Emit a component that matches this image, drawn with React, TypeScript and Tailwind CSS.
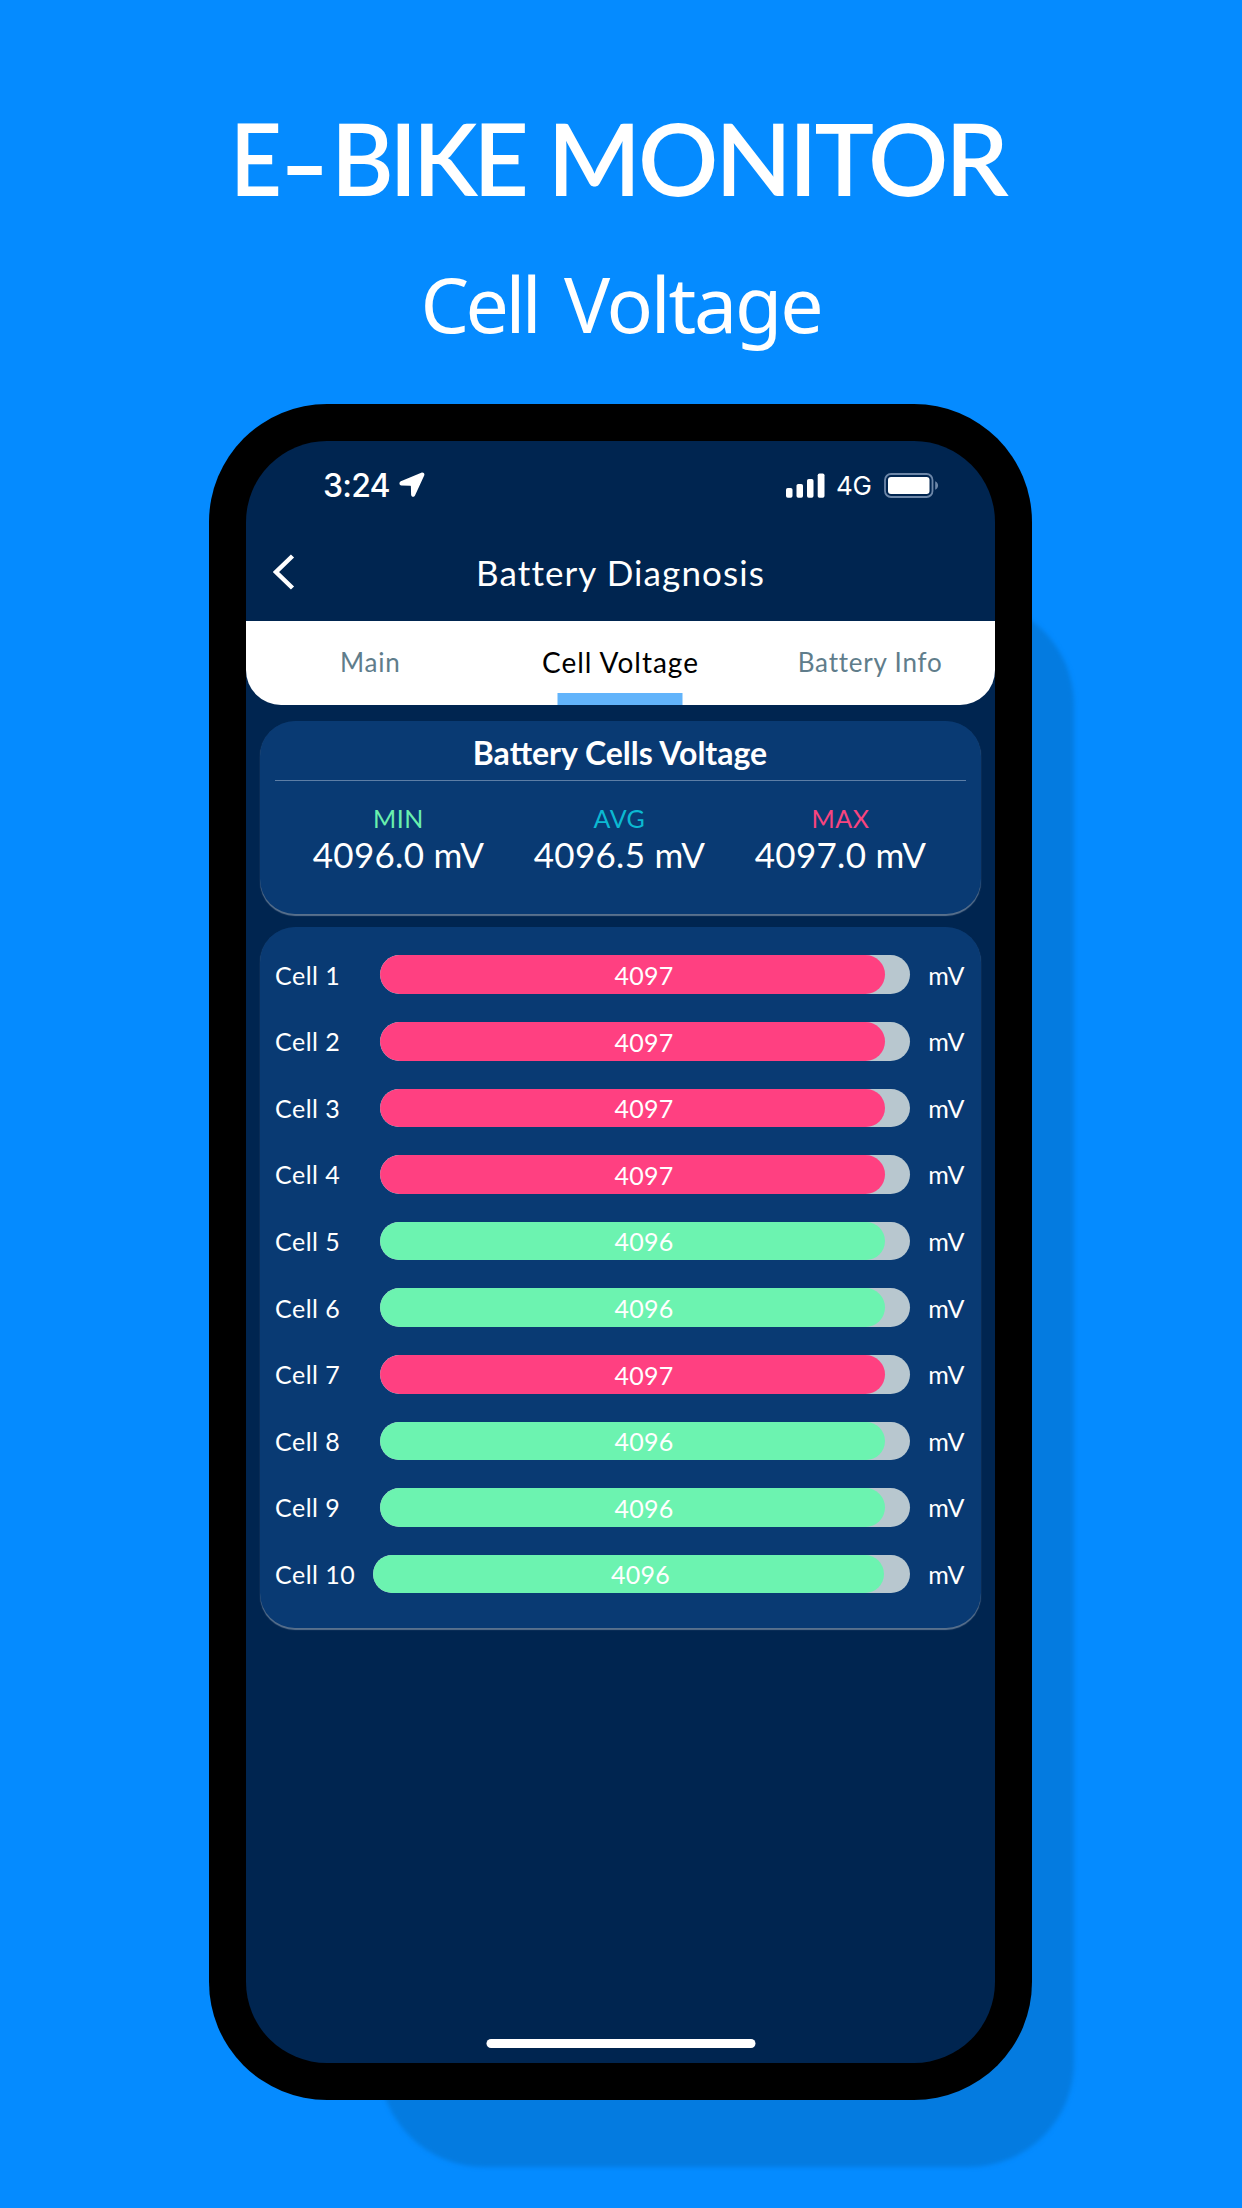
type Cell = { name: string; value: number };

const cells: Cell[] = [
  { name: 'Cell 1', value: 4097 },
  { name: 'Cell 2', value: 4097 },
  { name: 'Cell 3', value: 4097 },
  { name: 'Cell 4', value: 4097 },
  { name: 'Cell 5', value: 4096 },
  { name: 'Cell 6', value: 4096 },
  { name: 'Cell 7', value: 4097 },
  { name: 'Cell 8', value: 4096 },
  { name: 'Cell 9', value: 4096 },
  { name: 'Cell 10', value: 4096 },
];

const stats = [
  { label: 'MIN', value: '4096.0 mV', color: 'text-[#69f0ae]' },
  { label: 'AVG', value: '4096.5 mV', color: 'text-[#0cb9d2]' },
  { label: 'MAX', value: '4097.0 mV', color: 'text-[#f8447f]' },
];

function StatusBar() {
  return (
    <div className="flex h-[88px] items-center justify-between pl-[77px] pr-[56px] font-[Inter,sans-serif]">
      <div className="flex items-center">
        <span className="w-[76px] pt-px text-[32px] font-medium leading-none tracking-[-0.8px]">3:24</span>
        <svg width="26" height="26" viewBox="0 0 26 26" className="fill-white">
          <path d="M22.300 .7 1.800 9.300C-.2 10.200 .1 13.300 2.300 13.400l8.700 .4c.7 0 .9 .3 .9 .9l.2 8c.1 2.300 3 2.800 3.900 .7L25.200 3.600C26 1.600 24.400 0 22.300 .7Z" />
        </svg>
      </div>
      <div className="flex items-center">
        <svg width="39" height="25" viewBox="0 0 39 25" className="fill-white">
          <rect x="0" y="15" width="6.500" height="9.700" rx="1.800" />
          <rect x="10.500" y="11" width="6.500" height="13.700" rx="1.800" />
          <rect x="21" y="6" width="6.500" height="18.700" rx="1.800" />
          <rect x="31.700" y=".5" width="6.800" height="24.200" rx="1.800" />
        </svg>
        <span className="ml-[11px] w-[48px] pt-[2px] text-[26px] leading-none tracking-[-0.3px]">4G</span>
        <svg width="55" height="25" viewBox="0 0 55 25">
          <rect x="1" y="1" width="47.500" height="23" rx="6" fill="none" stroke="#6d87a8" strokeWidth="1.800" />
          <rect x="4" y="4" width="41.500" height="17" rx="3" fill="#fff" />
          <path d="M51.200 8.300c3.800 1.600 3.800 6.800 0 8.400Z" fill="#6d87a8" />
        </svg>
      </div>
    </div>
  );
}

function Header() {
  return (
    <header className="relative flex h-[92px] items-center justify-center pb-[6px]">
      <svg width="22" height="36" viewBox="0 0 22 36" className="absolute left-[27px] top-[25px]">
        <path d="M19.500 2 3 18l16.500 16" fill="none" stroke="#fff" strokeWidth="4.500" />
      </svg>
      <h2 className="text-[35px] leading-[42px] tracking-[1.100px]">Battery Diagnosis</h2>
    </header>
  );
}

function Tabs() {
  return (
    <nav className="grid h-[84px] grid-cols-3 rounded-b-[35px] bg-white text-center text-[26px] leading-[83px] tracking-[0.8px] text-[#607d8b]">
      <span className="-ml-[1px]">Main</span>
      <span className="relative text-[28px] leading-[82px] tracking-[1px] text-black">
        Cell Voltage
        <i className="absolute bottom-0 left-1/2 h-[12px] w-[125px] -translate-x-1/2 bg-[#62b4fb]" />
      </span>
      <span>Battery Info</span>
    </nav>
  );
}

function Summary() {
  return (
    <section className="mx-[14px] mt-[16px] h-[193px] rounded-[35px] bg-[#093a73] px-[15px] pt-[12px] shadow-[0_1.5px_1px_rgba(255,255,255,0.35)]">
      <h3 className="pr-px text-center text-[32px] font-bold leading-[40px]">Battery Cells Voltage</h3>
      <div className="mt-[7px] h-px bg-[#5d7ea6]" />
      <div className="ml-[13px] mr-[15px] mt-[22px] grid grid-cols-3 text-center">
        {stats.map((s) => (
          <div key={s.label}>
            <div className={`text-[25px] leading-[31px] tracking-[0.5px] ${s.color}`}>{s.label}</div>
            <div className="text-[35px] leading-[40px] tracking-[0.300px]">{s.value}</div>
          </div>
        ))}
      </div>
    </section>
  );
}

function CellRow({ cell }: { cell: Cell }) {
  const labelWidth = cell.name.length > 6 ? 'w-[98px]' : 'w-[105px]';
  const fill = cell.value > 4096 ? 'bg-[#ff4081]' : 'bg-[#6cf3b0]';
  return (
    <div className="flex h-[66.600px] items-center text-[25px] leading-[30px]">
      <span className={`shrink-0 tracking-[0.500px] ${labelWidth}`}>{cell.name}</span>
      <div className="relative h-[38.500px] flex-1 overflow-hidden rounded-full bg-[#b8c7cf]">
        <div className={`h-full w-[95.200%] rounded-full ${fill}`} />
        <span className="absolute inset-0 pr-[2px] pt-[4.500px] text-center tracking-[0.200px]">{cell.value}</span>
      </div>
      <span className="w-[56px] shrink-0 pr-px text-right tracking-[0.500px]">mV</span>
    </div>
  );
}

export default function App() {
  return (
    <main className="flex h-[2208px] w-[1242px] flex-col items-center overflow-hidden bg-[#058bff] font-[Lato,sans-serif] text-white">
      <h1 className="mt-[97px] flex w-[783px] whitespace-nowrap text-[100px] font-semibold leading-[120px]">
        <span className="w-[56px] origin-left scale-x-90">E</span>
        <span className="w-[45px]">
          <span className="inline-block translate-y-[5px] scale-x-[1.350]">-</span>
        </span>
        <span className="w-[217px] origin-left scale-x-[0.960] tracking-[-4.400px]">BIKE</span>
        <span className="tracking-[-3.200px]">MONITOR</span>
      </h1>
      <p className="mt-[37px] flex whitespace-nowrap font-['Noto_Sans',sans-serif] text-[77px] leading-[100px]">
        <span className="mr-[26px] tracking-[-3.600px]">Cell</span>
        <span className="tracking-[-2.200px]">Voltage</span>
      </p>
      <div className="relative mr-[1px] mt-[50px] h-[1696px] w-[823px] shrink-0">
        <div className="absolute left-[170px] top-[196px] h-[1567px] w-[695px] rounded-[105px] bg-[#047be0] blur-[2px]" />
        <div className="relative h-full rounded-[118px] bg-black p-[37px]">
          <div className="relative h-full overflow-hidden rounded-[81px] bg-[#002550]">
            <StatusBar />
            <Header />
            <Tabs />
            <Summary />
            <section className="mx-[14px] mt-[13px] h-[701px] rounded-[35px] bg-[#093a73] px-[15px] pt-[14.400px] shadow-[0_1.5px_1px_rgba(255,255,255,0.35)]">
              {cells.map((c) => (
                <CellRow key={c.name} cell={c} />
              ))}
            </section>
            <div className="absolute bottom-[15px] left-1/2 h-[9px] w-[269px] -translate-x-1/2 rounded-full bg-white" />
          </div>
        </div>
      </div>
    </main>
  );
}
